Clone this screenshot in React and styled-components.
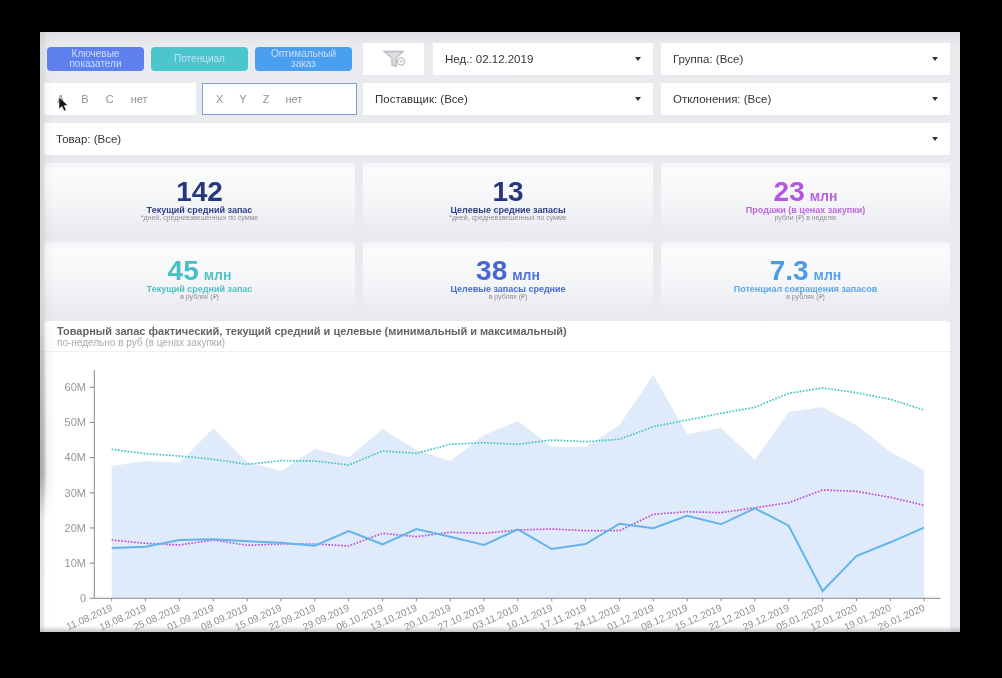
import React from "react";
import styled, { createGlobalStyle } from "styled-components";

const Global = createGlobalStyle`
  html, body { margin: 0; padding: 0; background: #000; }
  body { font-family: "Liberation Sans", Arial, sans-serif; }
`;

const Stage = styled.div`
  width: 1002px; height: 678px; box-sizing: border-box;
  background: #000; padding: 32px 42px 46px 40px; overflow: hidden;
`;
const Screen = styled.main`
  position: relative; width: 920px; height: 600px; overflow: hidden; box-sizing: border-box;
  padding: 11px 10px 0 4px;
  background: linear-gradient(180deg, #dfe1e4 0, #e9ebef 14px, #e8eaef 100%);
  filter: blur(0.6px);
`;
const LeftShade = styled.div`
  position: absolute; left: 0; top: 0; bottom: 0; width: 15px; pointer-events: none;
  background: linear-gradient(90deg, rgba(125,127,131,.62) 0, rgba(125,127,131,.5) 4px, rgba(125,127,131,.12) 7px, rgba(125,127,131,0) 15px);
  mask-image: linear-gradient(180deg, rgba(0,0,0,.25) 0, rgba(0,0,0,.3) 47%, rgba(0,0,0,.65) 55%, #000 74%, rgba(0,0,0,.1) 81%, rgba(0,0,0,.05) 100%);
`;
const BottomShade = styled.div`
  position: absolute; left: 0; right: 0; bottom: 0; height: 6px; pointer-events: none;
  background: linear-gradient(180deg, rgba(200,202,204,0), rgba(170,172,174,.7));
`;
const Controls = styled.div`
  display: grid; grid-template-columns: 311px 290px 289px; grid-auto-rows: 32px; gap: 8px;
`;
const Tabs = styled.div`
  display: flex; align-items: center; gap: 7px; padding: 0 3px;
`;
const Tab = styled.button`
  width: 97px; height: 24px; border: 0; padding: 0 8px; border-radius: 4px;
  background: ${p => p.$bg}; color: #c9dcf8;
  font: 10px/10px "Liberation Sans", Arial, sans-serif; text-align: center;
`;
const FilterCell = styled.div`
  display: grid; grid-template-columns: 61px 1fr; gap: 9px;
`;
const IconBox = styled.div`
  background: #fff; display: flex; align-items: center; justify-content: center;
`;
const Select = styled.div`
  background: #fff; display: flex; align-items: center; justify-content: space-between;
  padding: 0 12px; color: #333539; font-size: 11.5px; grid-column: ${p => p.$span || "auto"};
`;
const Caret = styled.span`
  width: 0; height: 0; border-left: 3.5px solid transparent; border-right: 3.5px solid transparent;
  border-top: 4px solid #333;
`;
const Pickers = styled.div`
  display: flex; gap: 6px;
`;
const Picker = styled.div`
  position: relative; flex: none; box-sizing: border-box; height: 32px;
  width: ${p => p.$w}px; background: #fff; display: flex; align-items: center; gap: ${p => p.$gap}px;
  padding-left: 13px; font-size: 11px; color: #8e9196;
  border: ${p => (p.$active ? "1px solid #7f9fcf" : "0")};
`;
const Pointer = styled.svg`
  position: absolute; left: 14px; top: 13px;
`;
const Cards = styled.div`
  display: grid; grid-template-columns: 311px 290px 289px; grid-auto-rows: 69px;
  column-gap: 8px; row-gap: 10px; margin-top: 8px;
`;
const Card = styled.section`
  background: linear-gradient(180deg, #f4f5f7 0, #fbfbfc 14%, #f5f6f8 55%, #e9ebf0 100%);
  display: flex; flex-direction: column; align-items: center; padding-top: 15px; box-sizing: border-box;
`;
const Value = styled.div`
  font-size: 28px; line-height: 28px; font-weight: 700; color: ${p => p.$c};
`;
const Unit = styled.span`
  font-size: 14px; line-height: 0; margin-left: 5px; opacity: .92;
`;
const Label = styled.div`
  font-size: 9px; line-height: 8px; font-weight: 700; color: ${p => p.$c};
`;
const Note = styled.div`
  font-size: 7px; line-height: 8px; color: #8d9095;
`;
const ChartCard = styled.section`
  background: #fff; margin-top: 10px; height: 311px; border-radius: 3px 3px 0 0;
`;
const ChartHead = styled.header`
  height: 31px; box-sizing: border-box; padding: 4px 13px 0; border-bottom: 1px solid #eef0f2;
`;
const ChartTitle = styled.h2`
  margin: 0; font-size: 11px; line-height: 12px; font-weight: 700; color: #62656a;
`;
const ChartSub = styled.div`
  font-size: 10px; line-height: 12px; color: #a9acb0;
`;
const Plot = styled.svg`
  display: block;
`;

const dates = ["11.08.2019","18.08.2019","25.08.2019","01.09.2019","08.09.2019","15.09.2019","22.09.2019","29.09.2019","06.10.2019","13.10.2019","20.10.2019","27.10.2019","03.11.2019","10.11.2019","17.11.2019","24.11.2019","01.12.2019","08.12.2019","15.12.2019","22.12.2019","29.12.2019","05.01.2020","12.01.2020","19.01.2020","26.01.2020"];
const X = i => 111.7 + 33.85 * i;
const area = [466,461,462.7,428.3,461.7,471,449,457.3,429.3,450,461,435,421,446.7,446.7,425,375,434.3,427.7,460,411.7,407.3,425,451.7,470];
const teal = [449.3,453.7,456,459.3,464.3,460.7,461,465,451,453.3,444.3,442.7,444.3,440,441.7,439.3,426.7,420,413.3,407.3,393.3,388,392.7,399.3,410];
const pink = [540,543.3,545,540,545.3,544,544,546,533.3,536.7,532.3,533.3,530,529,530.7,530.7,514.3,511.7,512.7,507.7,502.7,490,491.3,497.3,505.3];
const blue = [548,546.7,540,539.3,541.3,542.7,545.7,531,544.3,529,536.7,545,529.3,549,544,523.7,528.3,515.7,524.3,508.3,525.7,591,556,542.3,527.7];
const pts = a => a.map((y, i) => `${X(i).toFixed(1)},${y}`).join(" ");
const Y0 = 598.3;
const yTicks = [["0",0],["10M",1],["20M",2],["30M",3],["40M",4],["50M",5],["60M",6]];

function Chart() {
  return (
    <Plot width="906" height="280" viewBox="44 352 906 280" fontFamily="Liberation Sans, Arial, sans-serif">
      <polygon points={`${X(0)},${Y0} ${pts(area)} ${X(24)},${Y0}`} fill="#dfebfa" />
      <polyline points={pts(teal)} fill="none" stroke="#45c4c4" strokeWidth="1.7" strokeDasharray="1.7 1.5" />
      <polyline points={pts(pink)} fill="none" stroke="#c04fd0" strokeWidth="1.7" strokeDasharray="1.7 1.5" />
      <polyline points={pts(blue)} fill="none" stroke="#63b3ec" strokeWidth="2" />
      <path d={`M94.3 370V${Y0}H940.7`} fill="none" stroke="#85898d" strokeWidth="1" />
      {yTicks.map(([t, n]) => {
        const y = Y0 - n * 35.17;
        return (
          <g key={t}>
            <line x1="89.5" x2="94.3" y1={y} y2={y} stroke="#85898d" />
            <text x="86" y={y + 3.8} textAnchor="end" fontSize="11" fill="#94979b">{t}</text>
          </g>
        );
      })}
      {dates.map((d, i) => (
        <g key={d}>
          <line x1={X(i)} x2={X(i)} y1={Y0} y2={Y0 + 3} stroke="#85898d" />
          <text
            transform={`translate(${X(i) + 1.5} ${Y0 + 12}) rotate(-24)`}
            textAnchor="end" fontSize="10" fill="#8e9195"
          >{d}</text>
        </g>
      ))}
    </Plot>
  );
}

const cards = [
  { v: "142", l: "Текущий средний запас", n: "*дней, средневзвешенных по сумме", c: "#27377f", lc: "#2f3d86" },
  { v: "13", l: "Целевые средние запасы", n: "*дней, средневзвешенных по сумме", c: "#27377f", lc: "#2f3d86" },
  { v: "23", u: "млн", l: "Продажи (в ценах закупки)", n: "рубли (₽) в неделю", c: "#b356e2", lc: "#c166e0" },
  { v: "45", u: "млн", l: "Текущий средний запас", n: "в рублях (₽)", c: "#46bfc6", lc: "#4fc2c8" },
  { v: "38", u: "млн", l: "Целевые запасы средние", n: "в рублях (₽)", c: "#4568d2", lc: "#4a6dd0" },
  { v: "7.3", u: "млн", l: "Потенциал сокращения запасов", n: "в рублях (₽)", c: "#4b9ce8", lc: "#5ea6e6" },
];

export default function App() {
  return (
    <Stage>
      <Global />
      <Screen>
        <Controls>
          <Tabs>
            <Tab $bg="#5f80ee">Ключевые показатели</Tab>
            <Tab $bg="#4cc6cd">Потенциал</Tab>
            <Tab $bg="#4b9fef">Оптимальный заказ</Tab>
          </Tabs>
          <FilterCell>
            <IconBox>
              <svg width="24" height="20" viewBox="0 0 24 20" fill="none" stroke="#b9bcc0" strokeWidth="1.4">
                <path d="M2 2.5h19l-7 6.5v8.5l-4-1.6V9z" fill="#dcdee1" />
                <circle cx="19" cy="12.5" r="3.6" fill="#fff" />
                <path d="M17.4 12.5h3.2" />
              </svg>
            </IconBox>
            <Select>Нед.: 02.12.2019<Caret /></Select>
          </FilterCell>
          <Select>Группа: (Все)<Caret /></Select>
          <Pickers>
            <Picker $w={152} $gap={17}>
              <span>A</span><span>B</span><span>C</span><span>нет</span>
              <Pointer width="11" height="16" viewBox="0 0 11 16">
                <path d="M1 1v12l3-2.6 2 4.5 2.2-.9-2-4.4H10z" fill="#17181a" stroke="#fff" strokeWidth=".5" />
              </Pointer>
            </Picker>
            <Picker $w={155} $gap={16} $active>
              <span>X</span><span>Y</span><span>Z</span><span>нет</span>
            </Picker>
          </Pickers>
          <Select>Поставщик: (Все)<Caret /></Select>
          <Select>Отклонения: (Все)<Caret /></Select>
          <Select $span="1 / -1">Товар: (Все)<Caret /></Select>
        </Controls>
        <Cards>
          {cards.map(c => (
            <Card key={c.v}>
              <Value $c={c.c}>{c.v}{c.u && <Unit>{c.u}</Unit>}</Value>
              <Label $c={c.lc}>{c.l}</Label>
              <Note>{c.n}</Note>
            </Card>
          ))}
        </Cards>
        <ChartCard>
          <ChartHead>
            <ChartTitle>Товарный запас фактический, текущий средний и целевые (минимальный и максимальный)</ChartTitle>
            <ChartSub>по-недельно в руб (в ценах закупки)</ChartSub>
          </ChartHead>
          <Chart />
        </ChartCard>
        <LeftShade />
        <BottomShade />
      </Screen>
    </Stage>
  );
}
